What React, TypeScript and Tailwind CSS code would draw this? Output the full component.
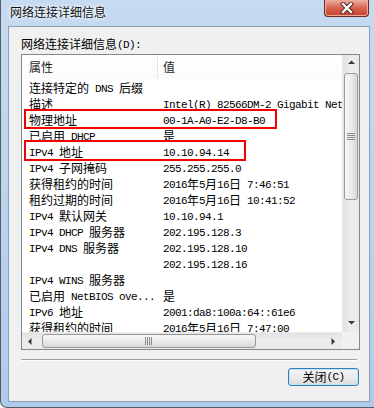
import React from "react";

const CJK = /([\u2E80-\u9FFF\uFF00-\uFFEF]+)/;

function T({ s }: { s: string }) {
  const parts = s.split(CJK).filter((p) => p.length > 0);
  return (
    <>
      {parts.map((p, i) =>
        CJK.test(p) ? (
          <span key={i} className="font-['Noto_Sans_CJK_SC',sans-serif] text-[12px] whitespace-pre">
            {p}
          </span>
        ) : (
          <span key={i} className="font-['Liberation_Mono',monospace] text-[11px] tracking-[-0.6px] whitespace-pre align-[1px]">
            {p}
          </span>
        )
      )}
    </>
  );
}

const rows: [string, string][] = [
  ["连接特定的 DNS 后缀", ""],
  ["描述", "Intel(R) 82566DM-2 Gigabit Network Connection"],
  ["物理地址", "00-1A-A0-E2-D8-B0"],
  ["已启用 DHCP", "是"],
  ["IPv4 地址", "10.10.94.14"],
  ["IPv4 子网掩码", "255.255.255.0"],
  ["获得租约的时间", "2016年5月16日 7:46:51"],
  ["租约过期的时间", "2016年5月16日 10:41:52"],
  ["IPv4 默认网关", "10.10.94.1"],
  ["IPv4 DHCP 服务器", "202.195.128.3"],
  ["IPv4 DNS 服务器", "202.195.128.10"],
  ["", "202.195.128.16"],
  ["IPv4 WINS 服务器", ""],
  ["已启用 NetBIOS ove...", "是"],
  ["IPv6 地址", "2001:da8:100a:64::61e6"],
  ["获得租约的时间", "2016年5月16日 7:47:00"],
];

function Arrow({ dir }: { dir: "up" | "down" | "left" | "right" }) {
  const pts =
    dir === "up"
      ? "1,5 8,5 4.5,1.5"
      : dir === "down"
      ? "1,2 8,2 4.5,5.5"
      : dir === "left"
      ? "5.5,1 5.5,8 2,4.5"
      : "2.5,1 2.5,8 6,4.5";
  return (
    <svg width="9" height="9" viewBox="0 0 9 9">
      <polygon points={pts} fill="#3b3b3b" />
    </svg>
  );
}

export default function App() {
  return (
    <div className="relative w-[374px] h-[408px] overflow-hidden bg-white">
      <div className="w-[374px] h-[408px] flex flex-col bg-gradient-to-b from-[#c6daf1] via-[#bcd3ee] to-[#aecbec] border-l border-b border-[#555c66] rounded-bl-[7px]">
        {/* title bar */}
        <div className="h-[26px] pl-[9px] pt-[4px] leading-[16px] text-[#101010] font-['Noto_Sans_CJK_SC',sans-serif] text-[12px] [text-shadow:0_0_6px_#ffffff,0_0_3px_#ffffff]">
          网络连接详细信息
        </div>
        {/* client */}
        <div className="flex-1 ml-[7px] mr-[4px] mb-[5px] border border-[#8d9fb5] bg-[#f0f0f0] pl-[12px] pt-[8px] flex flex-col">
          <div className="h-[16px] leading-[16px] text-black">
            <T s="网络连接详细信息(D):" />
          </div>
          {/* list */}
          <div className="mt-[3px] w-[339px] h-[296px] border border-[#828790] bg-white grid grid-cols-[320px_17px] grid-rows-[277px_17px]">
            <div className="overflow-hidden">
              <div className="h-[24px] flex items-center bg-gradient-to-b from-white to-[#fbfbfb]">
                <div className="w-[136px] h-full border-r border-[#e5e5e5] pl-[7px] flex items-center text-[#1e1e1e] leading-[16px]">
                  <T s="属性" />
                </div>
                <div className="pl-[5px] flex items-center text-[#1e1e1e] leading-[16px]">
                  <T s="值" />
                </div>
              </div>
              {rows.map(([k, v], i) => (
                <div key={i} className="h-[16px] leading-[16px] flex whitespace-nowrap text-black">
                  <div className="w-[136px] shrink-0 pl-[7px] overflow-hidden">
                    <T s={k} />
                  </div>
                  <div className="pl-[5px] whitespace-nowrap">
                    <T s={v} />
                  </div>
                </div>
              ))}
            </div>
            {/* vertical scrollbar */}
            <div className="flex flex-col bg-gradient-to-r from-[#e2e2e2] via-[#eeeeee] to-[#e8e8e8] border-l border-[#ececec]">
              <div className="h-[17px] flex items-center justify-center">
                <Arrow dir="up" />
              </div>
              <div className="mt-[1px] mx-[1px] h-[127px] rounded-[3px] border border-[#9a9a9a] bg-gradient-to-r from-[#f6f6f6] via-[#ececec] to-[#d6d6d6] flex items-center justify-center">
                <svg width="8" height="8" viewBox="0 0 8 8">
                  <rect x="0" y="0" width="8" height="1" fill="#8a8a8a" />
                  <rect x="0" y="2" width="8" height="1" fill="#8a8a8a" />
                  <rect x="0" y="4" width="8" height="1" fill="#8a8a8a" />
                  <rect x="0" y="6" width="8" height="1" fill="#8a8a8a" />
                </svg>
              </div>
              <div className="flex-1" />
              <div className="h-[17px] flex items-center justify-center">
                <Arrow dir="down" />
              </div>
            </div>
            {/* horizontal scrollbar */}
            <div className="flex items-stretch bg-gradient-to-b from-[#e2e2e2] via-[#eeeeee] to-[#e8e8e8] border-t border-[#ececec]">
              <div className="w-[17px] flex items-center justify-center">
                <Arrow dir="left" />
              </div>
              <div className="ml-[3px] my-[1px] w-[214px] rounded-[3px] border border-[#9a9a9a] bg-gradient-to-b from-[#f6f6f6] via-[#ececec] to-[#d6d6d6] flex items-center justify-center">
                <svg width="8" height="8" viewBox="0 0 8 8">
                  <rect x="0" y="0" width="1" height="8" fill="#8a8a8a" />
                  <rect x="2" y="0" width="1" height="8" fill="#8a8a8a" />
                  <rect x="4" y="0" width="1" height="8" fill="#8a8a8a" />
                  <rect x="6" y="0" width="1" height="8" fill="#8a8a8a" />
                </svg>
              </div>
              <div className="flex-1" />
              <div className="w-[17px] flex items-center justify-center">
                <Arrow dir="right" />
              </div>
            </div>
            <div className="bg-[#f0f0f0]" />
          </div>
          {/* separator */}
          <div className="mt-[9px] w-[336px] border-t border-b border-t-[#a0a0a0] border-b-white" />
          {/* button */}
          <div className="mt-[7px] w-[338px] flex justify-end">
            <div className="w-[71px] h-[18px] rounded-[3px] border border-[#3c7fb1] bg-gradient-to-b from-[#f4f4f4] via-[#ececec] to-[#dcdcdc] shadow-[inset_0_0_0_1px_#b5e6fb] flex items-center justify-center leading-[16px] text-black">
              <T s="关闭(C)" />
            </div>
          </div>
        </div>
      </div>

      {/* close button */}
      <div className="absolute top-0 right-[5px] w-[45px] h-[17px] rounded-b-[4px] border border-t-0 border-[#6b2b24] bg-gradient-to-b from-[#eab0a4] via-[#d7634f] to-[#c5412c] shadow-[inset_0_0_0_1px_#f0a898] flex items-center justify-center">
        <svg width="14" height="12" viewBox="0 0 14 12">
          <path d="M3 2 L11 10 M11 2 L3 10" stroke="#4a1e18" strokeWidth="4.2" strokeLinecap="square" />
          <path d="M3 2 L11 10 M11 2 L3 10" stroke="#ffffff" strokeWidth="2.4" strokeLinecap="square" />
        </svg>
      </div>

      {/* red annotation boxes */}
      <div className="absolute left-[24px] top-[109px] w-[253px] h-[20px] border-2 border-[#f00000]" />
      <div className="absolute left-[24px] top-[140px] w-[222px] h-[21px] border-2 border-[#f00000]" />
    </div>
  );
}
